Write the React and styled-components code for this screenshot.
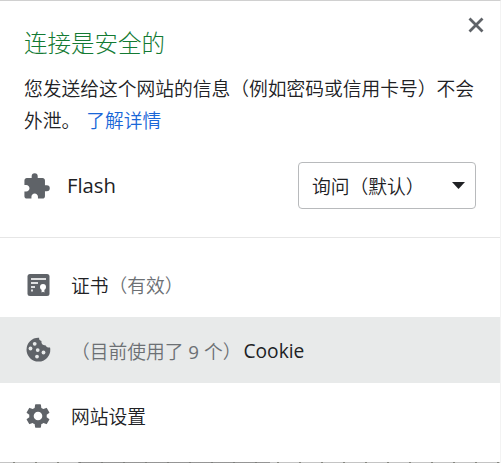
import React from "react";
import styled, { createGlobalStyle } from "styled-components";

const Global = createGlobalStyle`
  *, *::before, *::after { box-sizing: border-box; }
  html, body { margin: 0; padding: 0; background: #fff; }
  body {
    overflow: hidden;
    font-family: "Open Sans", "Noto Sans CJK SC", sans-serif;
    font-size: 18.75px;
    color: #202124;
  }
`;

const Bubble = styled.main`
  position: relative;
  width: 501px;
  height: 463px;
  display: flex;
  flex-direction: column;
  background: #fff;
  border-top: 1px solid #d0d0d0;
  border-right: 1px solid #f3f3f3;
`;

const Summary = styled.header`
  height: 136px;
  padding: 23px 20px 0 24px;
`;

const Title = styled.h1`
  margin: 0;
  font-family: "Noto Sans CJK SC", sans-serif;
  font-size: 23.5px;
  line-height: 36px;
  font-weight: 300;
  color: #137a33;
`;

const Description = styled.p`
  margin: 12px 0 0;
  font-family: "Noto Sans CJK SC", sans-serif;
  font-weight: 350;
  line-height: 31.5px;
  white-space: nowrap;
`;

const Link = styled.a`
  margin-left: 6px;
  color: #1a67d8;
`;

const CloseButton = styled.button`
  position: absolute;
  top: 13px;
  right: 13px;
  width: 22px;
  height: 22px;
  padding: 0;
  border: 0;
  background: none;
  color: #5f6368;
  svg { display: block; }
`;

const Permission = styled.section`
  height: 101px;
  padding: 25px 24px 0 22px;
  display: flex;
  align-items: flex-start;
  border-bottom: 1px solid #e6e6e6;
`;

const PermissionIcon = styled.span`
  width: 30px;
  height: 30px;
  margin-top: 10px;
  color: #5f6368;
  svg { display: block; }
`;

const PermissionName = styled.span`
  flex: 1;
  padding-left: 15px;
  line-height: 46px;
  font-size: 20.3px;
  font-weight: 400;
`;

const Select = styled.button`
  width: 178px;
  height: 47px;
  padding: 0 10px 0 13px;
  display: flex;
  align-items: center;
  justify-content: space-between;
  background: #fff;
  border: 1px solid #b8babc;
  border-radius: 4px;
  color: #202124;
  font: 350 18.75px "Noto Sans CJK SC", sans-serif;
  svg { display: block; }
`;

const Menu = styled.nav`
  flex: 1;
  padding-top: 14px;
  display: flex;
  flex-direction: column;
`;

const MenuItem = styled.div`
  height: ${(p) => (p.$active ? 66 : 65)}px;
  padding-left: 24px;
  display: flex;
  align-items: center;
  background: ${(p) => (p.$active ? "#e8eaea" : "transparent")};
  font-weight: 350;
  white-space: pre;
`;

const MenuIcon = styled.span`
  width: 28px;
  height: 28px;
  margin-right: 19px;
  color: #5f6368;
  svg { display: block; }
`;

const Muted = styled.span`
  color: #6c7074;
`;

const Count = styled.span`
  font-weight: 400;
`;

const Latin = styled.span`
  margin-left: 2px;
  font-size: 19.2px;
  font-weight: 400;
`;

const PageEdge = styled.footer`
  height: 1px;
  background: linear-gradient(90deg, transparent 78px, #77777799 78px, #77777799 270px, transparent 270px),
    repeating-linear-gradient(90deg, #c4c4c4 0 13px, #85867f 13px 15px, #c4c4c4 15px 22px);
`;

const Extension = () => (
  <svg width="29" height="29" viewBox="0 0 24 24" fill="currentColor">
    <path d="M20.5 11H19V7c0-1.1-.9-2-2-2h-4V3.500a2.500 2.500 0 0 0-5 0V5H4c-1.100 0-1.990.9-1.990 2v3.800H3.500c1.490 0 2.700 1.210 2.700 2.700s-1.210 2.700-2.700 2.700H2V20c0 1.100.9 2 2 2h3.800v-1.500c0-1.490 1.210-2.700 2.700-2.700s2.700 1.210 2.700 2.700V22H17c1.100 0 2-.9 2-2v-4h1.500a2.500 2.500 0 0 0 0-5z" />
  </svg>
);

const Close = () => (
  <svg width="22" height="22" viewBox="0 0 22 22" fill="none" stroke="currentColor" strokeWidth="2.800">
    <path d="M4.500 4.500l13 13M17.500 4.500l-13 13" />
  </svg>
);

const Arrow = () => (
  <svg width="13" height="7" viewBox="0 0 13 7" fill="#202124">
    <path d="M0 0h13L6.500 7z" />
  </svg>
);

const Certificate = () => (
  <svg width="28" height="28" viewBox="0 0 28 28">
    <rect x="3.500" y="3" width="22" height="22" rx="2.500" fill="currentColor" />
    <path d="M7 8h15M7 12h7M7 16h4M7 19.500h2" stroke="#dfe0e1" strokeWidth="1.900" />
    <circle cx="19" cy="16" r="3" fill="#fff" />
    <path d="M17.600 17h2.800v4.500L19 20.700l-1.400.8z" fill="#fff" />
  </svg>
);

const Cookie = () => (
  <svg width="28" height="28" viewBox="0 0 28 28">
    <path d="M14.500 1.800A11.900 11.900 0 1 0 26.300 13.300c0-.7-.1-1.300-.3-1.900-2 .4-3.600-.4-4.200-2-2.900.1-4.800-1.800-4.300-4.400-1.700-.3-2.600-1.400-2.400-3.200z" fill="currentColor" />
    <g fill="#e8eaea">
      <circle cx="10.700" cy="7.800" r="1.900" />
      <circle cx="6.500" cy="12.500" r="1.900" />
      <circle cx="13.700" cy="14.100" r="1.900" />
      <circle cx="19.500" cy="16.500" r="1.900" />
      <circle cx="13" cy="20.600" r="1.900" />
    </g>
  </svg>
);

const Gear = () => (
  <svg width="28" height="28" viewBox="0 0 24 24" fill="currentColor">
    <path d="M19.430 12.980c.04-.32.070-.64.070-.98s-.03-.66-.070-.98l2.110-1.650a.5.5 0 0 0 .12-.64l-2-3.460a.5.5 0 0 0-.61-.22l-2.490 1a7.300 7.300 0 0 0-1.690-.98l-.38-2.650A.49.490 0 0 0 14 2h-4a.49.490 0 0 0-.49.420l-.38 2.650c-.61.250-1.170.590-1.690.980l-2.490-1a.5.5 0 0 0-.61.220l-2 3.460a.5.5 0 0 0 .12.640l2.110 1.650c-.04.320-.070.650-.070.980s.03.660.070.980l-2.110 1.650a.5.5 0 0 0-.12.640l2 3.460c.12.220.39.300.61.220l2.490-1c.52.400 1.080.730 1.690.980l.38 2.650c.03.240.24.420.49.420h4c.25 0 .46-.18.490-.42l.38-2.650c.61-.25 1.170-.59 1.690-.98l2.490 1c.23.090.49 0 .61-.22l2-3.460a.5.5 0 0 0-.12-.64zM12 15.700a3.700 3.700 0 1 1 0-7.400 3.700 3.700 0 0 1 0 7.400z" />
  </svg>
);

export default function App() {
  return (
    <>
      <Global />
      <Bubble>
        <Summary>
          <Title>连接是安全的</Title>
          <Description>
            您发送给这个网站的信息（例如密码或信用卡号）不会
            <br />
            外泄。<Link>了解详情</Link>
          </Description>
        </Summary>
        <CloseButton aria-label="关闭"><Close /></CloseButton>
        <Permission>
          <PermissionIcon><Extension /></PermissionIcon>
          <PermissionName>Flash</PermissionName>
          <Select><span>询问（默认）</span><Arrow /></Select>
        </Permission>
        <Menu>
          <MenuItem>
            <MenuIcon><Certificate /></MenuIcon>
            证书<Muted>（有效）</Muted>
          </MenuItem>
          <MenuItem $active>
            <MenuIcon><Cookie /></MenuIcon>
            <Muted>（目前使用了<Count> 9 </Count>个）</Muted><Latin>Cookie</Latin>
          </MenuItem>
          <MenuItem>
            <MenuIcon><Gear /></MenuIcon>
            网站设置
          </MenuItem>
        </Menu>
        <PageEdge />
      </Bubble>
    </>
  );
}
